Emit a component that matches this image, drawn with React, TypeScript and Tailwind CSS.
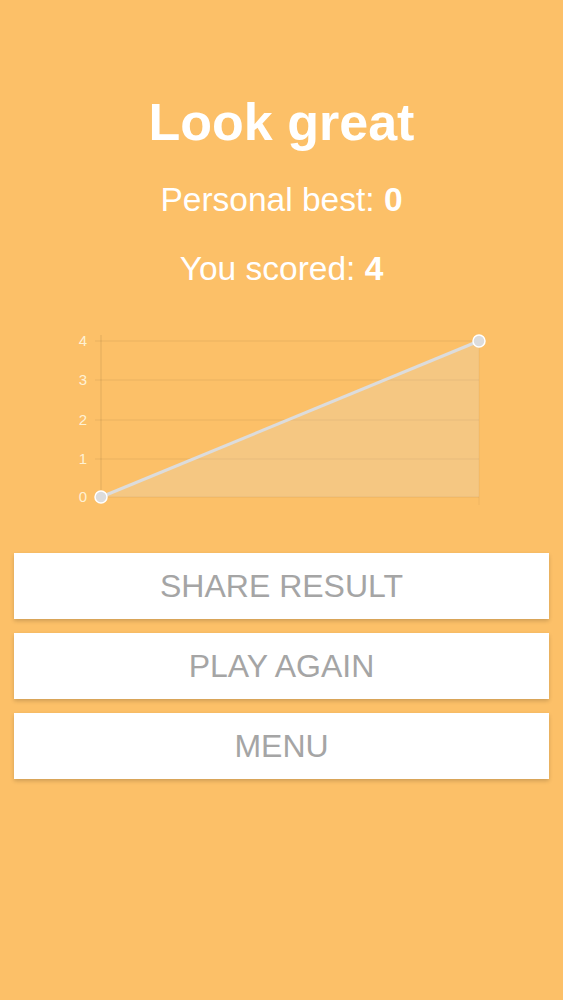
export default function App() {
  const buttons = ["SHARE RESULT", "PLAY AGAIN", "MENU"];
  const grid = [
    { v: 4, y: 16 },
    { v: 3, y: 55 },
    { v: 2, y: 95 },
    { v: 1, y: 134 },
    { v: 0, y: 172 },
  ];

  return (
    <div
      className="min-h-screen w-full bg-[#fcc068] text-white"
      style={{ fontFamily: '"Liberation Sans", Arial, sans-serif' }}
    >
      <div className="pt-[96px] flex flex-col items-center">
        <h1 className="text-[52px] leading-none font-bold">Look great</h1>
        <p className="mt-[35px] text-[33.5px] leading-none">
          Personal best: <span className="font-bold">0</span>
        </p>
        <p className="mt-[35px] text-[33.5px] leading-none">
          You scored: <span className="font-bold">4</span>
        </p>
      </div>

      <svg
        className="mt-[40px] block"
        width="563"
        height="190"
        viewBox="0 0 563 190"
      >
        {grid.map((g) => (
          <g key={g.v}>
            <line
              x1="95"
              x2="479"
              y1={g.y}
              y2={g.y}
              stroke="rgba(0,0,0,0.07)"
              strokeWidth="1"
            />
            <text
              x="87"
              y={g.y + 5}
              textAnchor="end"
              fontSize="15"
              fill="rgba(255,255,240,0.8)"
              fontFamily='"Liberation Sans", Arial, sans-serif'
            >
              {g.v}
            </text>
          </g>
        ))}
        <line x1="101" x2="101" y1="10" y2="178" stroke="rgba(0,0,0,0.1)" strokeWidth="1" />
        <line x1="479" x2="479" y1="16" y2="180" stroke="rgba(0,0,0,0.05)" strokeWidth="1" />
        <polygon points="101,172 479,16 479,172" fill="rgba(225,225,225,0.22)" />
        <line x1="101" y1="172" x2="479" y2="16" stroke="#dcdcdc" strokeWidth="3" />
        <circle cx="101" cy="172" r="6" fill="#dcdcdc" stroke="#fff" strokeWidth="1.5" />
        <circle cx="479" cy="16" r="6" fill="#dcdcdc" stroke="#fff" strokeWidth="1.5" />
      </svg>

      <div className="mt-[38px] px-[14px] flex flex-col gap-[14px]">
        {buttons.map((b) => (
          <button
            key={b}
            className="h-[66px] w-full bg-white text-[#a5a5a5] text-[32px] leading-none shadow-[0_2px_4px_rgba(0,0,0,0.18)]"
          >
            {b}
          </button>
        ))}
      </div>
    </div>
  );
}
